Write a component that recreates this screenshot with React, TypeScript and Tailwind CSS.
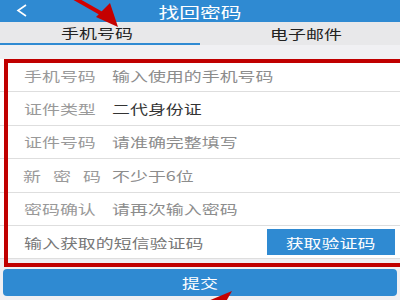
import React from "react";

const FONT = '"Noto Sans CJK SC", "Noto Sans", sans-serif';

function Wide({ children, center }: { children: React.ReactNode; center?: boolean }) {
  return (
    <span
      className={`inline-block whitespace-nowrap scale-x-[1.38] ${center ? "origin-center" : "origin-left"}`}
    >
      {children}
    </span>
  );
}

const rows = [
  { label: "手机号码", value: "输入使用的手机号码", filled: false },
  { label: "证件类型", value: "二代身份证", filled: true },
  { label: "证件号码", value: "请准确完整填写", filled: false },
  { label: "新密码", value: "不少于6位", filled: false, spaced: true },
  { label: "密码确认", value: "请再次输入密码", filled: false },
];

export default function App() {
  return (
    <div
      className="relative h-[300px] w-[400px] overflow-hidden bg-[#f0f0f3]"
      style={{ fontFamily: FONT }}
    >
      {/* header */}
      <div className="relative flex h-[22px] items-center justify-center bg-[#2f8ad2]">
        <svg className="absolute left-[16px] top-[4px]" width="12" height="13" viewBox="0 0 12 13">
          <polyline points="10,1 2,6.5 10,12" fill="none" stroke="#fff" strokeWidth="1.6" />
        </svg>
        <span className="text-[15px] leading-none text-white">
          <Wide center>找回密码</Wide>
        </span>
      </div>

      {/* tabs */}
      <div className="grid h-[23px] grid-cols-2 bg-[#e8e8ea] text-[13px] leading-none text-[#222]">
        <div className="flex items-center justify-center border-b-2 border-[#2f8ad2] pr-[6px]">
          <Wide center>手机号码</Wide>
        </div>
        <div className="flex items-center justify-center pl-[12px]">
          <Wide center>电子邮件</Wide>
        </div>
      </div>

      <div className="h-[14px]" />

      {/* form rows */}
      <div className="bg-white">
        {rows.map((r) => (
          <div
            key={r.label}
            className="flex h-[33.4px] items-center border-b border-[#dedede] pl-[24px] text-[13px] leading-none"
          >
            {r.spaced ? (
              <div className="flex w-[88px] pr-[12px] justify-between text-[#999]">
                {r.label.split("").map((c) => (
                  <span key={c} className="inline-block w-[16px] scale-x-[1.38] text-center">
                    {c}
                  </span>
                ))}
              </div>
            ) : (
              <div className="w-[88px] text-[#999]">
                <Wide>{r.label}</Wide>
              </div>
            )}
            <div className={r.filled ? "text-[#333]" : "text-[#8c8c8c]"}>
              <Wide>{r.value}</Wide>
            </div>
          </div>
        ))}
        <div className="flex h-[33.4px] items-center justify-between border-b border-[#dedede] pl-[24px] pr-[5px] text-[13px] leading-none">
          <div className="text-[#777]">
            <Wide>输入获取的短信验证码</Wide>
          </div>
          <div className="flex h-[26px] w-[128px] items-center justify-center bg-[#2f8ad2] text-white">
            <Wide center>获取验证码</Wide>
          </div>
        </div>
      </div>

      <div className="px-[3px] pt-[10px]">
        <div className="flex h-[27px] items-center justify-center rounded-[4px] bg-[#2f8ad2] text-[13px] leading-none text-white">
          <Wide center>提交</Wide>
        </div>
      </div>

      {/* red annotation box */}
      <div className="pointer-events-none absolute left-[4px] top-[59px] h-[208px] w-[400px] border-4 border-[#c00000]" />

      {/* red arrows */}
      <svg className="pointer-events-none absolute left-0 top-0" width="400" height="300" viewBox="0 0 400 300">
        <line x1="74" y1="-2" x2="104" y2="15" stroke="#d10000" strokeWidth="4" />
        <polygon points="118,27 96,17 110,3" fill="#c40000" />
        <polygon points="232,291 208,301 224,305" fill="#c40000" />
      </svg>
    </div>
  );
}
